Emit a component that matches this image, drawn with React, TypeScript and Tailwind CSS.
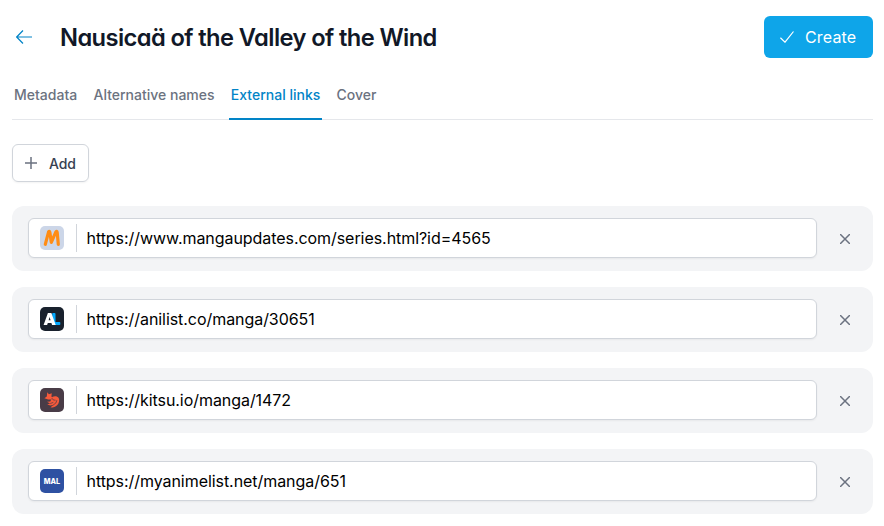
import React from "react";

const tabs = ["Metadata", "Alternative names", "External links", "Cover"];

function MangaUpdates() {
  return (
    <svg viewBox="0 0 24 24" className="size-6 shrink-0">
      <rect width="24" height="24" rx="5" fill="#ccd6e8" />
      <path d="M5.3 18.3 8.6 5.8Q9.6 4.6 9.9 6.4L11.3 16.4 15.9 5.8Q17 4.7 17.2 6.4L18.3 18.3" fill="none" stroke="#ff8c15" strokeWidth="3.2" strokeLinecap="round" strokeLinejoin="round" />
    </svg>
  );
}

function AniList() {
  return (
    <svg viewBox="0 0 24 24" className="size-6 shrink-0">
      <rect width="24" height="24" rx="5" fill="#19212d" />
      <path d="M12.2 6.9q0-.8.8-.8h1.7q.8 0 .8.8v8h4q.8 0 .8.8v1.6q0 .8-.8.8h-6.5q-.8 0-.8-.8z" fill="#02a9ff" />
      <path fillRule="evenodd" d="M7.9 6.1h3.5l4.3 12h-3.6l-.7-2H7.8l-.7 2H3.6zM8.6 13.3h2l-1-3.2z" fill="#fff" />
    </svg>
  );
}

function Kitsu() {
  return (
    <svg viewBox="0 0 24 24" className="size-6 shrink-0">
      <rect width="24" height="24" rx="5" fill="#493c47" />
      <path d="M7.3 4.2 8.9 6.3 11.8 5.2 11.4 8.4 12.3 9.6 10.9 11.6 8.2 11.5 4.4 10.2 6.8 8.4Z" fill="#f65a3b" />
      <path d="M12.3 8.9C14.4 7.7 17.5 7.9 18.7 10 19.7 12 19.1 15 17.3 17.1 15.4 19.2 12.9 20 10.5 19.3L13.8 16.8 10.4 17.4 7.2 16.4 10.1 15.5 7 13.8 10.3 13.6Z" fill="#f65a3b" />
      <path d="M12.4 10.4Q12.6 12.7 15.5 12.2M10.2 15.5 13.3 14.4M16.9 12.2Q16.7 15.4 13.2 17" fill="none" stroke="#493c47" strokeWidth=".7" />
    </svg>
  );
}

function MyAnimeList() {
  return (
    <svg viewBox="0 0 24 24" className="size-6 shrink-0">
      <rect width="24" height="24" rx="5" fill="#2e51a2" />
      <text x="3.8" y="14.6" textLength="16.4" lengthAdjust="spacingAndGlyphs" className="font-['Inter',sans-serif] text-[8px] font-extrabold" fill="#fff">MAL</text>
    </svg>
  );
}

const links = [
  { url: "https://www.mangaupdates.com/series.html?id=4565", Logo: MangaUpdates },
  { url: "https://anilist.co/manga/30651", Logo: AniList },
  { url: "https://kitsu.io/manga/1472", Logo: Kitsu },
  { url: "https://myanimelist.net/manga/651", Logo: MyAnimeList },
];

export default function App() {
  return (
    <main className="h-[526px] overflow-hidden bg-white pt-4 pr-[11px] pl-3 font-['Inter',sans-serif] text-[#111827]">
      <header className="flex h-[42px] items-center">
        <button aria-label="Back" className="ml-1 text-[#0284c7]">
          <svg viewBox="0 0 16 14" className="h-3.5 w-4" fill="none" stroke="currentColor" strokeWidth="1.2">
            <path d="M7 .5.7 7 7 13.5M.7 7H16" />
          </svg>
        </button>
        <h1 className="mt-0.5 ml-7 text-[23.7px] leading-8 font-semibold tracking-[-0.025em] whitespace-nowrap [font-feature-settings:'cv11']">
          Nausicaä of the Valley of the Wind
        </h1>
        <button className="ml-auto flex h-[42px] w-[109px] items-center rounded-md bg-[#0ea5e9] pl-4 text-white">
          <svg viewBox="0 0 14 12" className="h-3 w-3.5" fill="none" stroke="currentColor" strokeWidth="1.2">
            <path d="M.4 6.8 5 11.2 13.5.5" />
          </svg>
          <span className="ml-[11px] text-base tracking-[0.01em]">Create</span>
        </button>
      </header>
      <nav className="mt-[14px] flex h-12 gap-[12.3px] border-b border-[#e5e7eb]">
        {tabs.map((tab) => (
          <button
            key={tab}
            className={`-mb-px flex h-12 items-center border-b-2 px-0.5 pb-px text-sm font-medium ${
              tab === "External links" ? "border-[#0284c7] text-[#0284c7]" : "border-transparent text-[#6b7280]"
            }`}
          >
            {tab}
          </button>
        ))}
      </nav>
      <button className="mt-6 flex h-[38px] w-[77px] items-center rounded-md border border-[#d1d5db] pl-3 text-sm font-medium text-[#374151] shadow-xs">
        <svg viewBox="0 0 12 12" className="size-3 text-[#6b7280]" fill="none" stroke="currentColor" strokeWidth="1.5">
          <path d="M6 0V12M0 6H12" />
        </svg>
        <span className="mt-px ml-3 tracking-[-0.01em]">Add</span>
      </button>
      <div className="mt-6 flex flex-col gap-4">
        {links.map(({ url, Logo }) => (
          <div key={url} className="flex h-[65px] shrink-0 items-start rounded-xl bg-[#f3f4f6] pt-3 pl-4">
            <div className="flex h-10 w-[789px] items-center rounded-md border border-[#d1d5db] bg-white pl-[11px] shadow-xs">
              <Logo />
              <span className="ml-3 h-7 w-px bg-[#d1d5db]" />
              <span className="ml-[9.5px] text-base tracking-[-0.0036em] text-black">{url}</span>
            </div>
            <button aria-label="Remove" className="mt-4 ml-[23px] text-[#6b7280]">
              <svg viewBox="0 0 10 10" className="size-2.5" fill="none" stroke="currentColor" strokeWidth="1.5">
                <path d="M0 0 10 10M10 0 0 10" />
              </svg>
            </button>
          </div>
        ))}
      </div>
    </main>
  );
}
